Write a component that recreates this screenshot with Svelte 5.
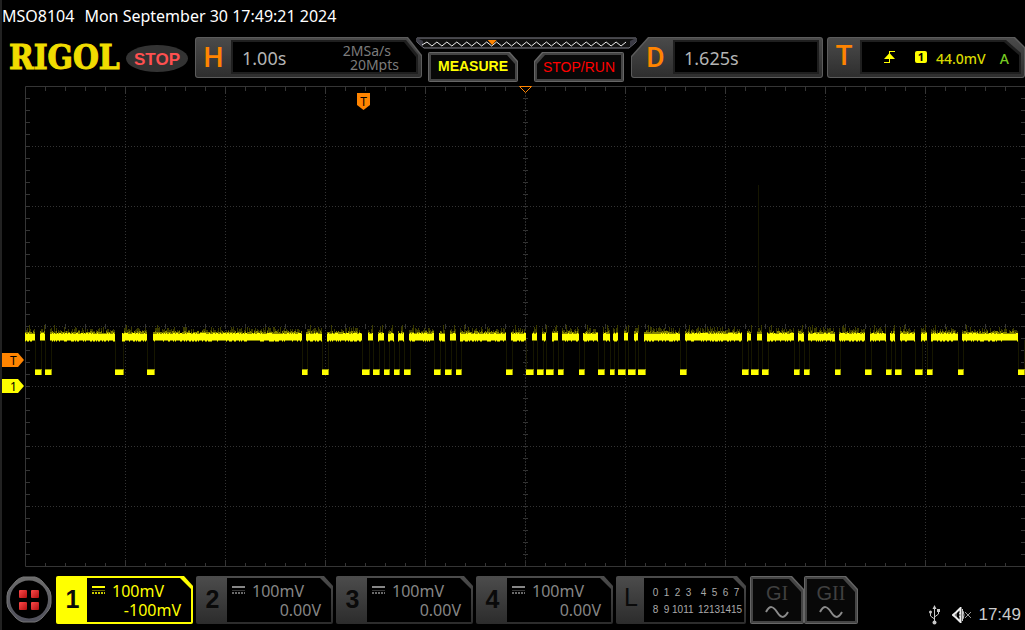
<script>
  const model = 'MSO8104';
  const timestamp = 'Mon September 30 17:49:21 2024';

  const channels = [
    { id: 1, scale: '100mV', offset: '-100mV', active: true },
    { id: 2, scale: '100mV', offset: '0.00V', active: false },
    { id: 3, scale: '100mV', offset: '0.00V', active: false },
    { id: 4, scale: '100mV', offset: '0.00V', active: false }
  ];

  const digital = [
    ['0', '1', '2', '3', '4', '5', '6', '7'],
    ['8', '9', '10', '11', '12', '13', '14', '15']
  ];

  // graticule: 10 x 8 divisions, 5 ticks per division
  const W = 1000;
  const H = 481;
  const cols = Array.from({ length: 9 }, (_, i) => (i + 1) * 100 + 0.5);
  const rows = Array.from({ length: 7 }, (_, i) => (i + 1) * 60 + 0.5);
  const xTicks = Array.from({ length: 49 }, (_, i) => (i + 1) * 20 + 0.5);
  const yTicks = Array.from({ length: 39 }, (_, i) => (i + 1) * 12 + 0.5);

  // low pulses of the serial signal [start, end]
  const pulses = [
    [10, 16], [20, 26], [90, 98], [122, 129], [277, 282], [297, 303],
    [337, 344], [348, 354], [359, 364], [369, 374], [379, 385],
    [409, 415], [420, 426], [431, 436], [481, 487], [501, 508],
    [512, 518], [521, 528], [533, 538], [554, 559], [573, 579],
    [585, 589], [593, 600], [603, 610], [613, 620], [655, 661],
    [717, 723], [726, 733], [737, 743], [769, 774], [779, 784],
    [810, 815], [840, 846], [861, 866], [870, 876], [890, 897],
    [902, 907], [933, 938], [993, 999]
  ];

  let seed = 7;
  function rand() {
    seed = (seed * 16807) % 2147483647;
    return seed / 2147483647;
  }

  const highs = [];
  let last = 0;
  for (const [start, end] of pulses) {
    highs.push([last, start]);
    last = end - 1;
  }

  let core = '';
  let fuzz = '';
  let haze = '';
  for (const [from, to] of highs) {
    for (let x = from; x < to; x++) {
      const top = 247 + Math.round(rand() * 1.2);
      const bottom = 254 + Math.round(rand() * 0.8);
      core += `M${x + 0.5} ${top}V${bottom}`;
      fuzz += `M${x + 0.5} ${247 - Math.round(rand() * 2)}V${bottom + 1}`;
      if (rand() > 0.35) {
        haze += `M${x + 0.5} ${241 + Math.round(rand() * 4)}V247`;
      }
    }
    haze += `M${from + 4.5} 239V247`;
  }

  let zigzag = 'M6 8';
  for (let i = 1; i <= 41; i++) {
    zigzag += `L${6 + i * 5} ${i % 2 ? 5 : 9}`;
  }
</script>

<div class="scope">
  <div class="title">
    <span>{model}</span>
    <span>{timestamp}</span>
  </div>

  <header>
    <div class="brand">
      <span class="logo">RIGOL</span>
      <span class="status">STOP</span>
    </div>

    <div class="panel horizontal">
      <div class="face">
        <span class="letter">H</span>
        <div class="well">
          <div class="screen">
            <span class="value">1.00s</span>
            <div class="rate">
              <span>2MSa/s</span>
              <span>20Mpts</span>
            </div>
          </div>
        </div>
      </div>
    </div>

    <div class="center">
      <svg class="memory" viewBox="0 0 222 13" preserveAspectRatio="none">
        <path d="M1 1H221V5L214 11H8L1 5Z" fill="#111" stroke="#85858f" />
        <path d="M1 1L7 4V10L1 5ZM221 1L215 4V10L221 5Z" fill="#3c3c46" />
        <path d={zigzag} fill="none" stroke="#eee" />
        <path d="M72 3H81L76.500 8Z" fill="#ff8400" />
      </svg>
      <div class="actions">
        <button class="key measure"><span class="rim"><span class="cap">MEASURE</span></span></button>
        <button class="key run"><span class="rim"><span class="cap">STOP/RUN</span></span></button>
      </div>
    </div>

    <div class="panel delay">
      <div class="face">
        <span class="letter">D</span>
        <div class="well">
          <div class="screen"><span class="value">1.625s</span></div>
        </div>
      </div>
    </div>

    <div class="panel trigger">
      <div class="face">
        <span class="letter">T</span>
        <div class="well">
          <div class="screen">
            <svg class="edge" width="13" height="14" viewBox="0 0 13 14">
              <path d="M6 1.500H12M6.500 1V13M1 12.500H7" fill="none" stroke="#ffff00" />
              <path d="M6.500 3L12 9H1Z" fill="#ffff00" />
            </svg>
            <span class="source">1</span>
            <span class="level">44.0mV</span>
            <span class="sweep">A</span>
          </div>
        </div>
      </div>
    </div>
  </header>

  <main>
    <div class="gutter">
      <span class="tag trig">T</span>
      <span class="tag zero">1</span>
    </div>
    <div class="plot">
      <svg class="grid" viewBox="0 0 {W} {H}" preserveAspectRatio="none">
        <g class="dots">
          {#each cols as x}
            <path d="M{x} 1V480" />
          {/each}
          {#each rows as y}
            <path d="M1 {y}H1000" />
          {/each}
        </g>
        <g class="ticks">
          <path d="M1000 0.500H0.500V480.500H1000" />
          {#each xTicks as x, i}
            <path d="M{x} 0V{i % 5 === 4 ? 8 : 5}M{x} 238V243M{x} 481V{i % 5 === 4 ? 474 : 477}" />
          {/each}
          {#each yTicks as y}
            <path d="M0 {y}H5M498 {y}H503M996 {y}H1000" />
          {/each}
          <path class="axis" d="M500.500 0V480" />
        </g>

        <path class="edges" d="M733.500 99V240" />
        {#each pulses as [start, end]}
          <path class="edges" d="M{start + 0.5} 254V284M{end + 0.5} 254V284" />
        {/each}
        <path d={haze} stroke="#3b3b00" />
        <path d={fuzz} stroke="#858500" />
        <path d={core} stroke="#ffff00" />
        {#each pulses as [start, end]}
          <rect x={start} y="283" width={end - start + 1} height="6" fill="#999900" />
          <rect x={start} y="284" width={end - start} height="5" fill="#ffff00" />
        {/each}
      </svg>
      <svg class="origin" width="13" height="8" viewBox="0 0 13 8">
        <path d="M0.500 0.500H12.500L6.500 6.500Z" fill="#000" stroke="#ff8400" />
      </svg>
      <span class="position">T</span>
    </div>
  </main>

  <footer>
    <button class="menu" aria-label="Menu">
      <svg width="46" height="47" viewBox="0 0 46 47">
        <defs>
          <linearGradient id="ring" x2="0" y2="1">
            <stop offset="0" stop-color="#6c6c6c" />
            <stop offset="1" stop-color="#50505c" />
          </linearGradient>
          <linearGradient id="tile" x2="1" y2="1">
            <stop offset="0" stop-color="#ff4a4a" />
            <stop offset="1" stop-color="#b01010" />
          </linearGradient>
        </defs>
        <path d="M17 1H29Q33 2 36 5L42 12Q45 16 45 20V27Q45 31 42 35L36 42Q33 45 29 46H17Q13 45 10 42L4 35Q1 31 1 27V20Q1 16 4 12L10 5Q13 2 17 1Z" fill="url(#ring)" stroke="#777" />
        <circle cx="23" cy="23.500" r="19" fill="#000" />
        <g fill="url(#tile)">
          <rect x="13" y="14" width="8" height="8" rx="1" />
          <rect x="25" y="14" width="8" height="8" rx="1" />
          <rect x="13" y="26" width="8" height="8" rx="1" />
          <rect x="25" y="26" width="8" height="8" rx="1" />
        </g>
      </svg>
    </button>

    <div class="channels">
      {#each channels as ch}
        <button class="channel" class:active={ch.active}>
          <span class="number">{ch.id}</span>
          <span class="readout">
            <span class="scale">
              <svg width="13" height="8" viewBox="0 0 13 8">
                <path d="M0 1H13" stroke="currentColor" stroke-width="2" />
                <path d="M0 4.500H13" stroke="currentColor" opacity="0.4" />
                <path d="M0 7H13" stroke="currentColor" stroke-width="2" stroke-dasharray="2 1" opacity="0.8" />
              </svg>
              {ch.scale}
            </span>
            <span class="offset">{ch.offset}</span>
          </span>
        </button>
      {/each}
      <button class="channel logic">
        <span class="number">L</span>
        <span class="readout">
          {#each digital as row}
            <span class="bits">
              {#each row as bit}
                <span>{bit}</span>
              {/each}
            </span>
          {/each}
        </span>
      </button>
    </div>

    <div class="generators">
      {#each ['I', 'II'] as name}
        <button class="key gen">
          <span class="rim">
            <span class="cap">
              <span class="genName">G<i>{name}</i></span>
              <svg width="24" height="12" viewBox="0 0 24 12">
                <path d="M1 6C5 -1 8 0 12 6S19 13 23 6" fill="none" stroke="#8a8a8a" stroke-width="2" />
              </svg>
            </span>
          </span>
        </button>
      {/each}
    </div>

    <div class="tray">
      <svg width="11" height="20" viewBox="0 0 11 20">
        <path d="M5.500 2V17M5.500 14L1.500 11V7M5.500 12L9.500 9V6" fill="none" stroke="#c8c8c8" />
        <path d="M5.500 0L7.500 4H3.500Z" fill="#c8c8c8" />
        <circle cx="5.500" cy="17.500" r="2" fill="#c8c8c8" />
        <circle cx="1.500" cy="7" r="1.500" fill="#c8c8c8" />
        <rect x="8" y="4" width="3" height="3" fill="#c8c8c8" />
      </svg>
      <svg width="20" height="16" viewBox="0 0 20 16">
        <path d="M8.500 1V15L4 10.500L1 8L4 5.500Z" fill="none" stroke="#eee" stroke-width="2" />
        <path d="M4 6V10M10.500 2V14M7 6L9 8L7 10M11 4Q13 8 11 12" fill="none" stroke="#ccc" />
        <path d="M13 5L19 11M19 5L13 11" stroke="#999" />
      </svg>
      <span class="clock">17:49</span>
    </div>
  </footer>
</div>

<style>
  :global(body) {
    background: #000;
  }

  .scope {
    min-height: 100vh;
    box-sizing: border-box;
    border-left: 2px solid #222;
    background: #000;
    font-family: "Noto Sans", sans-serif;
    color: #b4b4b4;
    overflow: hidden;
  }

  button {
    padding: 0;
    border: none;
    background: none;
    font-family: inherit;
    color: inherit;
    cursor: pointer;
  }

  svg {
    display: block;
  }

  .title {
    display: flex;
    gap: 10px;
    height: 37px;
    line-height: 32px;
    font-size: 16px;
    color: #fff;
  }

  header {
    display: flex;
    align-items: flex-start;
    height: 49px;
  }

  .brand {
    display: flex;
    align-items: center;
    flex: none;
    width: 193px;
    height: 42px;
  }

  .logo {
    width: 117px;
    margin-left: 7px;
    font-family: "DejaVu Serif Condensed", "DejaVu Serif", serif;
    font-size: 33px;
    font-weight: bold;
    line-height: 40px;
    color: #f0dc00;
    -webkit-text-stroke: 1px #f0dc00;
  }

  .status {
    width: 62px;
    height: 27px;
    line-height: 29px;
    border-radius: 50%;
    background: #333;
    font-family: "Liberation Sans", sans-serif;
    font-size: 17px;
    font-weight: bold;
    text-align: center;
    color: #ff5050;
  }

  /* framed readouts */
  .panel {
    box-sizing: border-box;
    height: 41px;
    padding: 1px;
    border-radius: 3px;
    background: #5c5c5c;
  }

  .face {
    display: flex;
    height: 100%;
    box-sizing: border-box;
    padding: 2px 3px 3px 0;
    border-radius: 2px;
    background: linear-gradient(#4a4a4a, #2e2e2e);
  }

  .letter {
    width: 35px;
    flex: none;
    text-align: center;
    font-family: Roboto, sans-serif;
    font-size: 28px;
    font-weight: 500;
    line-height: 36px;
    color: #ff8400;
  }

  .well {
    flex: 1;
    padding: 2px;
    background: #1f1f1f;
  }

  .screen {
    display: flex;
    align-items: center;
    height: 100%;
    background: #000;
  }

  .horizontal {
    flex: 227 1 227px;
  }

  .horizontal, .horizontal .face {
    clip-path: polygon(0 0, calc(100% - 14px) 0, 100% 18px, 100% 100%, 0 100%);
  }

  .horizontal .well, .horizontal .screen {
    clip-path: polygon(0 0, calc(100% - 12px) 0, 100% 15px, 100% 100%, 0 100%);
  }

  .value {
    padding: 2px 0 0 9px;
    font-size: 18px;
  }

  .rate {
    display: flex;
    flex-direction: column;
    flex: 1;
    align-items: flex-end;
    padding: 2px 17px 0 0;
    font-size: 14px;
    line-height: 14px;
    color: #7c7c7c;
  }

  .rate span:first-child {
    padding-right: 8px;
  }

  .center {
    flex: 209 1 209px;
  }

  .memory {
    width: calc(100% + 12px);
    height: 13px;
    margin: 0 -6px;
  }

  .actions {
    display: flex;
    justify-content: space-between;
    padding: 2px 7px 0 6px;
  }

  .key {
    display: block;
    width: 90px;
    height: 30px;
    background: #666;
    padding: 1px;
    border-radius: 2px;
  }

  .rim {
    display: block;
    box-sizing: border-box;
    height: 100%;
    padding: 2px;
    background: #444;
  }

  .cap {
    display: block;
    height: 100%;
    background: #080808;
    font-family: "Liberation Sans", sans-serif;
    font-size: 14px;
    line-height: 24px;
    text-align: center;
  }

  .measure, .measure .rim, .measure .cap {
    clip-path: polygon(0 0, calc(100% - 8px) 0, 100% 9px, 100% 100%, 0 100%);
  }

  .measure {
    font-weight: bold;
    color: #ffff00;
  }

  .measure .cap {
    line-height: 22px;
  }

  .run, .run .rim, .run .cap {
    clip-path: polygon(8px 0, 100% 0, 100% 100%, 0 100%, 0 9px);
  }

  .run {
    color: #ff0000;
  }

  .delay {
    flex: 192 1 192px;
  }

  .delay, .delay .face {
    clip-path: polygon(17px 0, 100% 0, 100% 100%, 0 100%, 0 19px);
  }

  .delay .letter {
    box-sizing: border-box;
    width: 41px;
    padding-left: 6px;
  }

  .trigger {
    flex: 198 1 198px;
    margin-left: 4px;
  }

  .trigger, .trigger .face {
    clip-path: polygon(0 0, calc(100% - 10px) 0, 100% 10px, 100% 100%, 0 100%);
  }

  .trigger .well, .trigger .screen {
    clip-path: polygon(0 0, calc(100% - 15px) 0, 100% 13px, 100% 100%, 0 100%);
  }

  .trigger .letter {
    width: 32px;
    line-height: 32px;
  }

  .edge {
    margin-left: 21px;
  }

  .source {
    width: 12px;
    height: 12px;
    margin: 0 9px 0 19px;
    border-radius: 2px;
    background: #ffff00;
    font-size: 11px;
    font-weight: bold;
    line-height: 12px;
    text-align: center;
    color: #000;
  }

  .level {
    padding-top: 2px;
    font-size: 14px;
    font-weight: 500;
    color: #d8d800;
  }

  .sweep {
    margin-left: 14px;
    padding-top: 2px;
    font-size: 14px;
    font-weight: 500;
    color: #77cc22;
  }

  main {
    display: flex;
  }

  .gutter {
    position: relative;
    flex: none;
    width: 23px;
  }

  .tag {
    position: absolute;
    left: 0;
    box-sizing: border-box;
    width: 22px;
    height: 14px;
    padding-left: 8px;
    clip-path: polygon(0 0, 16px 0, 100% 50%, 16px 100%, 0 100%);
    font-size: 12px;
    line-height: 16px;
    color: #000;
  }

  .trig {
    top: 267px;
    background: #ff8400;
  }

  .zero {
    top: 293px;
    background: #ffff00;
  }

  .plot {
    position: relative;
    flex: 1;
  }

  .grid {
    width: 100%;
    height: 481px;
  }

  .grid path {
    fill: none;
  }

  .dots {
    stroke: #333;
    stroke-dasharray: 1 2;
  }

  .ticks {
    stroke: #353535;
  }

  .axis {
    stroke: #2b2b2b;
    stroke-dasharray: 2 1;
  }

  .edges {
    stroke: #161600;
  }

  .origin {
    position: absolute;
    top: 0;
    left: calc(50% - 6px);
  }

  .position {
    position: absolute;
    top: 7px;
    left: 33.2%;
    width: 13px;
    height: 17px;
    clip-path: polygon(0 0, 100% 0, 100% 70%, 50% 100%, 0 70%);
    background: #ff8400;
    font-size: 12px;
    line-height: 17px;
    text-align: center;
    color: #000;
  }

  footer {
    display: flex;
    align-items: flex-start;
    margin-top: 9px;
    padding: 0 4px;
  }

  .menu {
    flex: none;
    margin-right: 4px;
  }

  .channels {
    display: flex;
    gap: 3px;
  }

  .channel {
    display: flex;
    box-sizing: border-box;
    width: 137px;
    height: 48px;
    padding: 2px;
    border-radius: 2px;
    background: linear-gradient(#4c4c4c, #2c2c2c);
    clip-path: polygon(0 0, calc(100% - 9px) 0, 100% 10px, 100% 100%, 0 100%);
    color: #868686;
  }

  .channel.active {
    background: #ffff00;
    color: #ffff00;
  }

  .number {
    width: 29px;
    font-family: "Liberation Sans", sans-serif;
    font-size: 25px;
    font-weight: bold;
    line-height: 42px;
    text-align: center;
    color: #0a0a0a;
  }

  .readout {
    flex: 1;
    height: 100%;
    box-sizing: border-box;
    padding: 4px 10px 0 5px;
    background: #000;
    clip-path: polygon(0 0, calc(100% - 11px) 0, 100% 11px, 100% 100%, 0 100%);
    font-size: 16px;
    line-height: 19px;
  }

  .scale {
    display: flex;
    gap: 7px;
  }

  .scale svg {
    margin-top: 4px;
  }

  .offset {
    display: block;
    text-align: right;
  }

  .logic {
    width: 130px;
  }

  .logic .number {
    width: 27px;
    font-size: 25px;
    font-weight: normal;
    line-height: 38px;
  }

  .logic .readout {
    padding: 6px 2px 0 6px;
    font-family: "Liberation Sans", sans-serif;
    font-size: 10px;
    line-height: 17px;
    color: #aaa;
  }

  .bits {
    display: grid;
    grid-template-columns: 11px 11px 11px 15px 11px 11px 11px 11px;
  }

  .bits span {
    display: flex;
    width: 11px;
    justify-content: center;
  }

  .generators {
    display: flex;
    margin-left: 4px;
  }

  .gen {
    width: 54px;
    height: 48px;
  }

  .gen, .gen .rim, .gen .cap {
    clip-path: polygon(0 0, calc(100% - 12px) 0, 100% 13px, 100% 100%, 0 100%);
  }

  .gen .cap {
    display: flex;
    flex-direction: column;
    align-items: center;
    gap: 2px;
    padding-top: 3px;
    box-sizing: border-box;
  }

  .genName {
    font-size: 20px;
    line-height: 22px;
    color: #404040;
  }

  .genName i {
    font-family: "Liberation Serif", serif;
    font-style: normal;
  }

  .tray {
    display: flex;
    align-items: center;
    gap: 12px;
    margin: 29px 0 0 auto;
    height: 20px;
  }

  .clock {
    margin-left: -6px;
    font-family: "Liberation Sans", sans-serif;
    font-size: 17px;
    line-height: 20px;
    color: #ccc;
  }
</style>
